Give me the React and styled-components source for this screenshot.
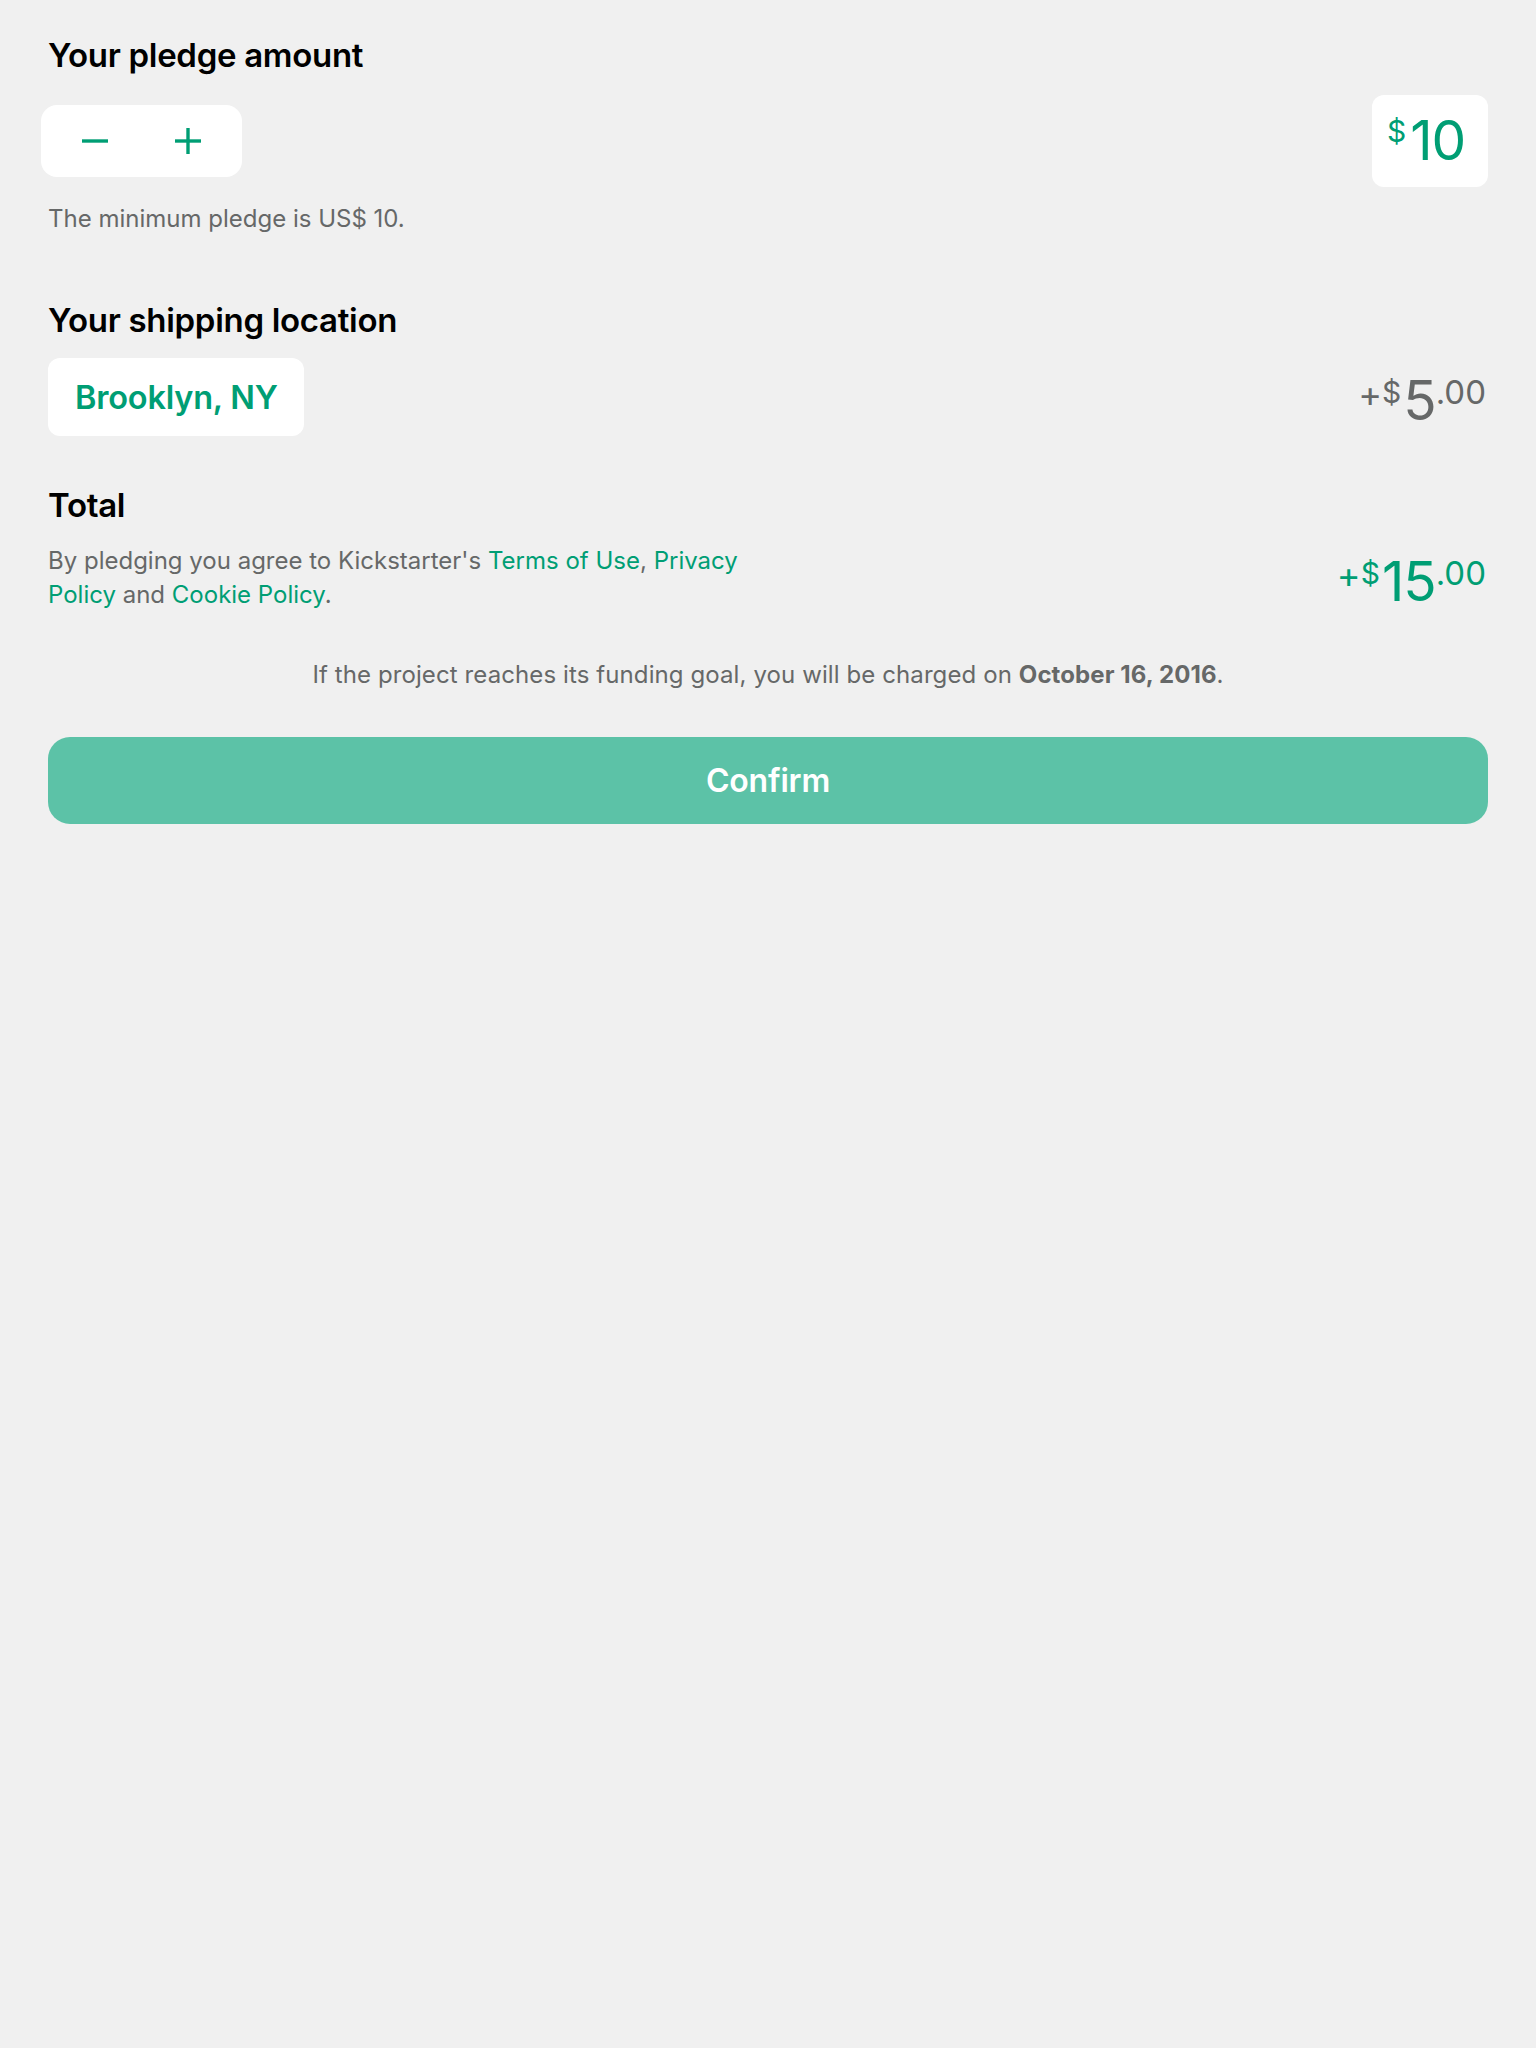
import React from "react";
import styled, { createGlobalStyle } from "styled-components";

const GREEN = "#009e74";
const GREY = "#666868";

const Global = createGlobalStyle`
  html, body {
    margin: 0;
    padding: 0;
    background: #f0f0f0;
  }
  body {
    font-family: Inter, "Noto Sans", "Liberation Sans", sans-serif;
    -webkit-font-smoothing: antialiased;
  }
`;

const Page = styled.div`
  min-height: 2048px;
  box-sizing: border-box;
  padding: 35px 48px 0 48px;
  display: flex;
  flex-direction: column;
`;

const Heading = styled.h2`
  margin: ${(p) => p.$mt || 0}px 0 0 0;
  font-size: 33px;
  line-height: 40px;
  font-weight: 600;
  color: #000;
  letter-spacing: -0.3px;
`;

const Row = styled.div`
  display: flex;
  align-items: center;
  justify-content: space-between;
  margin-top: ${(p) => p.$mt || 0}px;
`;

const Stepper = styled.div`
  display: flex;
  background: #fff;
  border-radius: 16px;
  height: 72px;
  padding: 0 7px;
  margin-left: -7px;
`;

const StepButton = styled.button`
  width: 93.5px;
  height: 72px;
  border: none;
  background: transparent;
  padding: 0;
  display: flex;
  align-items: center;
  justify-content: center;
  cursor: pointer;
`;

const AmountBox = styled.div`
  background: #fff;
  border-radius: 12px;
  height: 92px;
  width: 116px;
  box-sizing: border-box;
  padding: 18px 0 0 15px;
  display: flex;
  align-items: flex-start;
  color: ${GREEN};
`;

const Sup = styled.span`
  font-size: ${(p) => p.$size}px;
  line-height: 1;
  margin-top: ${(p) => p.$mt || 0}px;
  margin-right: ${(p) => p.$mr || 0}px;
`;

const Big = styled.span`
  font-size: 55px;
  line-height: 1;
  font-weight: 400;
  letter-spacing: -1px;
`;

const Note = styled.p`
  margin: ${(p) => p.$mt || 0}px 0 0 0;
  font-size: 24px;
  line-height: ${(p) => p.$lh || 32}px;
  color: ${GREY};
  text-align: ${(p) => (p.$center ? "center" : "left")};
  max-width: ${(p) => (p.$narrow ? "700px" : "none")};
  letter-spacing: ${(p) => (p.$center ? "0.1px" : "0")};

  b {
    font-weight: 700;
  }
`;

const Link = styled.a`
  color: ${GREEN};
  text-decoration: none;
`;

const LocationBox = styled.div`
  background: #fff;
  border-radius: 12px;
  height: 78px;
  padding: 0 26px 0 27px;
  display: flex;
  align-items: center;
  font-size: 32.5px;
  font-weight: 600;
  color: ${GREEN};
  letter-spacing: -0.2px;
`;

const Price = styled.div`
  display: flex;
  align-items: flex-start;
  color: ${(p) => p.$color};
  margin: 7px 2px 0 0;
`;

const PlusSign = styled.span`
  font-size: 36px;
  line-height: 1;
  margin-top: 3px;
`;

const ConfirmButton = styled.button`
  margin-top: 46px;
  width: 100%;
  height: 87px;
  border: none;
  border-radius: 22px;
  background: #5cc2a7;
  color: #fff;
  font-family: inherit;
  font-size: 32px;
  font-weight: 600;
  letter-spacing: -0.2px;
  cursor: pointer;
`;

const MinusIcon = () => (
  <svg width="28" height="28" viewBox="0 0 28 28">
    <line x1="1" y1="14" x2="27" y2="14" stroke={GREEN} strokeWidth="3.4" />
  </svg>
);

const PlusIcon = () => (
  <svg width="28" height="28" viewBox="0 0 28 28">
    <line x1="1" y1="14" x2="27" y2="14" stroke={GREEN} strokeWidth="3.4" />
    <line x1="14" y1="1" x2="14" y2="27" stroke={GREEN} strokeWidth="3.4" />
  </svg>
);

const PriceTag = ({ color, whole }) => (
  <Price $color={color}>
    <PlusSign>+</PlusSign>
    <Sup $size={30} $mt={4} $mr={2}>$</Sup>
    <Big>{whole}</Big>
    <Sup $size={33} $mt={3}>.00</Sup>
  </Price>
);

export default function App() {
  return (
    <>
      <Global />
      <Page>
        <Heading>Your pledge amount</Heading>
        <Row $mt={20}>
          <Stepper>
            <StepButton aria-label="Decrease">
              <MinusIcon />
            </StepButton>
            <StepButton aria-label="Increase">
              <PlusIcon />
            </StepButton>
          </Stepper>
          <AmountBox>
            <Sup $size={30} $mt={3} $mr={4}>$</Sup>
            <Big>10</Big>
          </AmountBox>
        </Row>
        <Note $mt={16}>The minimum pledge is US$ 10.</Note>

        <Heading $mt={65}>Your shipping location</Heading>
        <Row $mt={18}>
          <LocationBox>Brooklyn, NY</LocationBox>
          <PriceTag color={GREY} whole="5" />
        </Row>

        <Heading $mt={49}>Total</Heading>
        <Row $mt={19}>
          <Note $narrow $lh={34}>
            By pledging you agree to Kickstarter's <Link href="#">Terms of Use</Link>,{" "}
            <Link href="#">Privacy Policy</Link> and <Link href="#">Cookie Policy</Link>.
          </Note>
          <PriceTag color={GREEN} whole="15" />
        </Row>

        <Note $center $mt={47}>
          If the project reaches its funding goal, you will be charged on <b>October 16, 2016</b>.
        </Note>

        <ConfirmButton>Confirm</ConfirmButton>
      </Page>
    </>
  );
}
